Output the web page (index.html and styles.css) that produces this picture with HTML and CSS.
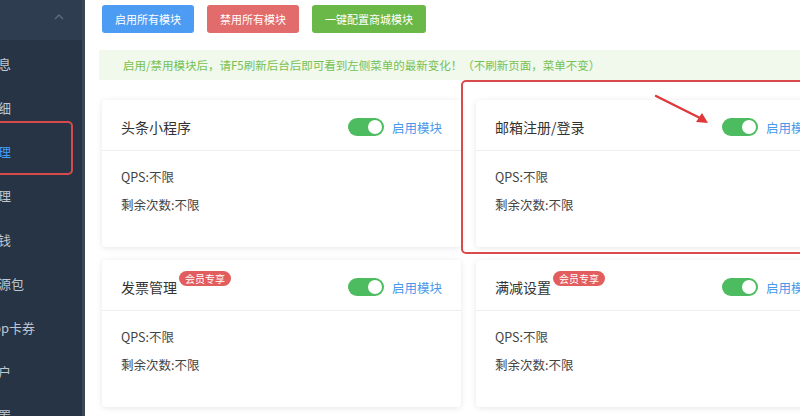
FILE: index.html
```html
<!DOCTYPE html>
<html lang="zh-CN">
  <head>
    <title>模块管理</title>
    <meta charset="UTF-8">
    <link rel="stylesheet" href="styles.css">
  </head>
  <body>
    <div class="app">
      <aside class="sidebar">
        <div class="side-head">
          <svg class="chevron" width="10" height="6" viewBox="0 0 10 6">
            <path d="M1 5 L5 1 L9 5" fill="none" stroke="#5d6b7c" stroke-width="1.4"/>
          </svg>
        </div>
        <ul class="menu">
          <li>账户信息</li>
          <li>账单明细</li>
          <li class="active">模块管理</li>
          <li>应用管理</li>
          <li>提现零钱</li>
          <li>短信资源包</li>
          <li>微信App卡券</li>
          <li>商家用户</li>
          <li>系统设置</li>
        </ul>
      </aside>

      <main class="main">
        <div class="actions">
          <button class="btn btn-blue">启用所有模块</button>
          <button class="btn btn-red">禁用所有模块</button>
          <button class="btn btn-green">一键配置商城模块</button>
        </div>

        <div class="notice">启用/禁用模块后，请F5刷新后台后即可看到左侧菜单的最新变化！（不刷新页面，菜单不变）</div>

        <div class="modules">
          <div class="card">
            <div class="card-head">
              <span class="card-title">头条小程序</span>
              <div class="switch-wrap"><span class="switch"></span><span class="switch-label">启用模块</span></div>
            </div>
            <div class="card-body">
              <p>QPS:不限</p>
              <p>剩余次数:不限</p>
            </div>
          </div>
          <div class="card">
            <div class="card-head">
              <span class="card-title">邮箱注册/登录</span>
              <div class="switch-wrap"><span class="switch"></span><span class="switch-label">启用模块</span></div>
            </div>
            <div class="card-body">
              <p>QPS:不限</p>
              <p>剩余次数:不限</p>
            </div>
          </div>
          <div class="card">
            <div class="card-head">
              <span class="card-title">发票管理<span class="vip">会员专享</span></span>
              <div class="switch-wrap"><span class="switch"></span><span class="switch-label">启用模块</span></div>
            </div>
            <div class="card-body">
              <p>QPS:不限</p>
              <p>剩余次数:不限</p>
            </div>
          </div>
          <div class="card">
            <div class="card-head">
              <span class="card-title">满减设置<span class="vip">会员专享</span></span>
              <div class="switch-wrap"><span class="switch"></span><span class="switch-label">启用模块</span></div>
            </div>
            <div class="card-body">
              <p>QPS:不限</p>
              <p>剩余次数:不限</p>
            </div>
          </div>
        </div>
      </main>

      <!-- annotation marks drawn over the page -->
      <div class="mark mark-menu"></div>
      <div class="mark mark-card"></div>
      <svg class="arrow" width="60" height="36" viewBox="0 0 60 36">
        <path d="M2 2 L50 26" stroke="#e0383a" stroke-width="2.4" stroke-linecap="round"/>
        <path d="M54 29 L42 28 L48 19 Z" fill="#e0383a"/>
      </svg>
    </div>
  </body>
</html>
```

FILE: styles.css
```css
* {
  box-sizing: border-box;
}

body {
  margin: 0;
  padding: 0;
  background-color: #ffffff;
  font-family: 'Noto Sans CJK SC', 'Noto Sans', sans-serif;
  color: #333333;
  overflow: hidden;
}

.app {
  position: relative;
  display: flex;
  width: 800px;
  height: 416px;
  overflow: hidden;
}

/* sidebar, cropped at the left edge */
.sidebar {
  flex: 0 0 200px;
  margin-left: -115px;
  background-color: #263445;
  border-right: 3px solid #3a4656;
}

.side-head {
  height: 40px;
  background-color: #2f3d50;
  display: flex;
  align-items: center;
  justify-content: flex-end;
  padding: 0 18px 6px 0;
}

.menu {
  list-style: none;
  margin: 0;
  padding: 2px 0 0 0;
}

.menu li {
  height: 44px;
  line-height: 44px;
  padding-left: 74px;
  font-size: 13px;
  color: #bfc7d1;
  white-space: nowrap;
}

.menu li.active {
  color: #409eff;
}

/* main area */
.main {
  flex: 1;
  padding: 5px 0 0 17px;
  overflow: hidden;
}

.actions {
  display: flex;
  gap: 13px;
}

.btn {
  height: 28px;
  padding: 0 13px;
  border: none;
  border-radius: 3px;
  font-family: inherit;
  font-size: 11px;
  color: #ffffff;
}

.btn-blue {
  background-color: #4d9cf3;
}

.btn-red {
  background-color: #e26b6b;
}

.btn-green {
  background-color: #6ab847;
}

.notice {
  margin: 17px 0 20px -3px;
  height: 30px;
  line-height: 30px;
  padding-left: 24px;
  background-color: #f1f8ec;
  color: #77c152;
  font-size: 11.5px;
  white-space: nowrap;
}

.modules {
  display: grid;
  grid-template-columns: 359px 359px;
  column-gap: 15px;
  row-gap: 13px;
}

.card {
  background: #ffffff;
  border-radius: 4px;
  box-shadow: 0 1px 6px rgba(0, 0, 0, 0.1);
}

.card-head {
  height: 51px;
  display: flex;
  align-items: center;
  justify-content: space-between;
  padding: 4px 19px 0 19px;
  border-bottom: 1px solid #eeeeee;
}

.card-title {
  font-size: 14px;
  color: #333333;
  white-space: nowrap;
}

.vip {
  display: inline-block;
  position: relative;
  top: -10px;
  margin-left: 2px;
  padding: 0 6px;
  height: 15px;
  line-height: 15px;
  border-radius: 8px;
  background-color: #e25d5e;
  color: #ffffff;
  font-size: 10px;
}

.switch-wrap {
  display: flex;
  align-items: center;
  gap: 8px;
}

.switch {
  position: relative;
  width: 36px;
  height: 18px;
  border-radius: 9px;
  background-color: #4dbb5f;
}

.switch::after {
  content: '';
  position: absolute;
  right: 2px;
  top: 2px;
  width: 14px;
  height: 14px;
  border-radius: 50%;
  background: #ffffff;
}

.switch-label {
  font-size: 12.5px;
  color: #4a97e8;
  white-space: nowrap;
}

.card-body {
  padding: 16px 19px 32px 19px;
}

.card-body p {
  margin: 0;
  height: 20px;
  line-height: 20px;
  font-size: 12.5px;
  color: #444444;
}

.card-body p + p {
  margin-top: 8px;
}

/* red annotation marks */
.mark {
  position: absolute;
  border: 2px solid #d94a4c;
  border-radius: 5px;
}

.mark-menu {
  left: -10px;
  top: 121px;
  width: 83px;
  height: 54px;
}

.mark-card {
  left: 461px;
  top: 80px;
  width: 360px;
  height: 174px;
}

.arrow {
  position: absolute;
  left: 654px;
  top: 94px;
}
```
